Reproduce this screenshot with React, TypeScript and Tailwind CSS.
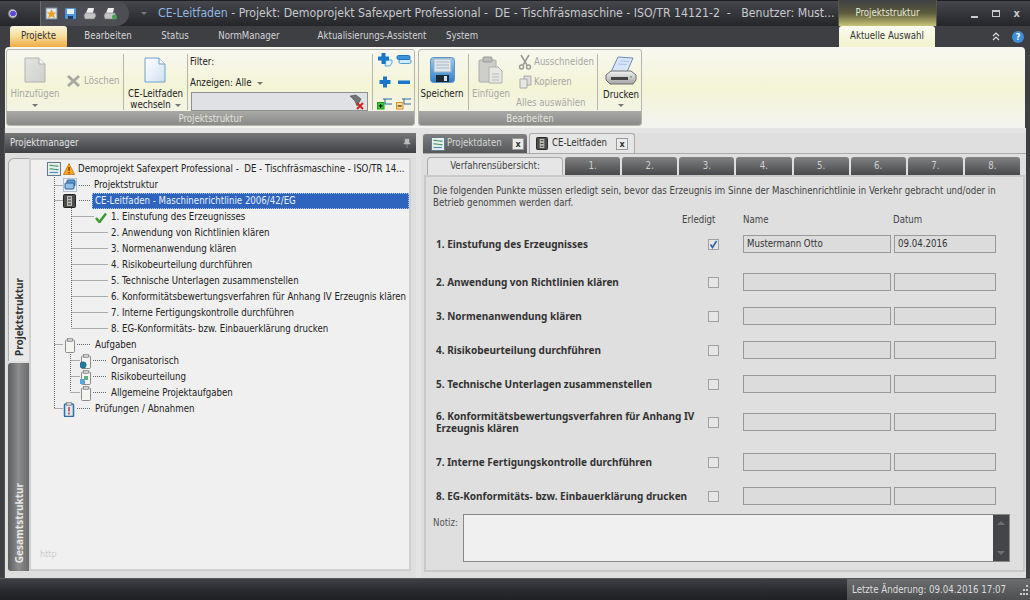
import React from "react";

const font = "font-['DejaVu_Sans','Liberation_Sans',sans-serif] [font-stretch:condensed]";
const boldFont = "font-['Noto_Sans',sans-serif] [font-stretch:normal]";

function Caret({ className = "" }: { className?: string }) {
  return <span className={`inline-block w-0 h-0 border-x-[3px] border-x-transparent border-t-[3px] border-t-[#777] ${className}`} />;
}

function PageIcon({ blue = false, w = 22, h = 26 }: { blue?: boolean; w?: number; h?: number }) {
  return (
    <svg width={w} height={h} viewBox="0 0 22 26">
      <defs>
        <linearGradient id={blue ? "pgb" : "pgg"} x1="0" y1="0" x2="1" y2="1">
          <stop offset="0" stopColor={blue ? "#ffffff" : "#e4e4e0"} />
          <stop offset="1" stopColor={blue ? "#cfe0f2" : "#cfcfcb"} />
        </linearGradient>
      </defs>
      <path d="M1 1H15L21 7V25H1Z" fill={`url(#${blue ? "pgb" : "pgg"})`} stroke={blue ? "#6f9fd0" : "#b2b2ae"} />
      <path d="M15 1V7H21" fill="#f4f4f4" stroke={blue ? "#6f9fd0" : "#b2b2ae"} />
    </svg>
  );
}

function Floppy() {
  return (
    <svg width="25" height="26" viewBox="0 0 25 26">
      <defs>
        <linearGradient id="fl" x1="0" y1="0" x2="0" y2="1">
          <stop offset="0" stopColor="#9cc9ee" />
          <stop offset="1" stopColor="#2f7fcb" />
        </linearGradient>
      </defs>
      <rect x=".5" y=".5" width="24" height="25" rx="3" fill="url(#fl)" stroke="#5d93c4" />
      <rect x="4" y="2" width="17" height="13" fill="#dfe6ec" stroke="#9db2c4" />
      <path d="M6 5H19M6 8H19M6 11H19" stroke="#a6b8c7" />
      <rect x="6" y="18" width="13" height="7" fill="#1d2a36" />
      <rect x="14" y="19" width="3" height="5" fill="#cfe0ee" />
    </svg>
  );
}

function Clipboard26() {
  return (
    <svg width="26" height="28" viewBox="0 0 26 28">
      <rect x="1" y="4" width="17" height="22" rx="1" fill="#cfcfca" stroke="#aaa" />
      <rect x="5" y="1" width="9" height="5" rx="1" fill="#bdbdb8" stroke="#999" />
      <path d="M11 11H20L24 15V27H11Z" fill="#e6e6e2" stroke="#b0b0ac" />
      <path d="M14 18H21M14 21H21M14 24H21" stroke="#bbb" />
    </svg>
  );
}

function Printer() {
  return (
    <svg width="32" height="29" viewBox="0 0 32 29">
      <defs>
        <linearGradient id="pr" x1="0" y1="0" x2="0" y2="1">
          <stop offset="0" stopColor="#f2f2f2" />
          <stop offset="1" stopColor="#a4a4a4" />
        </linearGradient>
      </defs>
      <path d="M13 1L28 2L22 16H6Z" fill="#d6e6f8" stroke="#6d8db8" />
      <path d="M15 5L24 5.5M13 8L22 8.5" stroke="#aac4e2" />
      <path d="M6 15H26L31 19V24L28 28H5L1 24V19Z" fill="url(#pr)" stroke="#6e6e6e" />
      <rect x="6" y="21" width="17" height="3" fill="#444" />
      <rect x="25" y="20" width="2" height="1.5" fill="#5cc05c" />
    </svg>
  );
}

function Scissors() {
  return (
    <svg className="shrink-0" width="14" height="16" viewBox="0 0 14 16" fill="none" stroke="#9a9a96" strokeWidth="1.5">
      <path d="M3 1L9 11M11 1L5 11" />
      <circle cx="3.5" cy="13" r="2" />
      <circle cx="10.5" cy="13" r="2" />
    </svg>
  );
}

function CopyIcon() {
  return (
    <svg className="shrink-0" width="14" height="14" viewBox="0 0 14 14">
      <path d="M6 1H13V10H6Z" fill="#ddd" stroke="#aaa" />
      <path d="M2 4H9V13H2Z" fill="#e8e8e4" stroke="#aaa" />
    </svg>
  );
}

function Eraser() {
  return (
    <svg width="16" height="16" viewBox="0 0 16 16">
      <path d="M2 2L8 1L13 5L9 12L7 7Z" fill="#6f7477" stroke="#4b4f52" strokeWidth=".6" />
      <path d="M9 9L15 15M15 9L9 15" stroke="#d12222" strokeWidth="2" />
    </svg>
  );
}

function SmallTool({ kind }: { kind: string }) {
  const blue = "#1877c9";
  return (
    <svg width="16" height="14" viewBox="0 0 16 14">
      {kind === "addCopy" && (
        <>
          <path d="M9 7H15V10L13 13H8Z" fill="#e8f2fa" stroke="#5aa6dd" />
          <path d="M4.5 0H8.5V3.5H12V7.5H8.5V11H4.5V7.5H1V3.5H4.5Z" fill={blue} />
        </>
      )}
      {kind === "stack" && (
        <>
          <rect x="3" y="6.5" width="12" height="4" rx="1.5" fill="#d6e8f6" stroke="#4f9bd8" />
          <rect x="1" y="2.5" width="13" height="4" rx="1.5" fill="#3f93d8" stroke={blue} />
        </>
      )}
      {kind === "plus" && <path d="M6 1.5H10V5H13.5V9H10V12.5H6V9H2.5V5H6Z" fill={blue} />}
      {kind === "minus" && <rect x="2" y="5.5" width="12" height="3.5" fill={blue} />}
      {kind === "treePlus" && (
        <>
          <path d="M6 3H15M8 3V8H15" stroke="#2b6aa5" fill="none" />
          <rect x=".5" y="6.5" width="6.5" height="6.5" fill="#39d039" stroke="#1f9a1f" />
          <path d="M3.7 8V12M1.7 10H5.7" stroke="#000" />
        </>
      )}
      {kind === "treeMinus" && (
        <>
          <path d="M6 3H15M8 3V8H15" stroke="#2b6aa5" fill="none" />
          <rect x=".5" y="6.5" width="6.5" height="6.5" fill="#f8e0a0" stroke="#e08a20" />
          <path d="M1.7 10H5.7" stroke="#000" />
        </>
      )}
    </svg>
  );
}

function ProjectIcon() {
  return (
    <svg className="shrink-0" width="14" height="14" viewBox="0 0 14 14">
      <rect x=".5" y=".5" width="13" height="13" fill="#e8efe9" stroke="#66788a" />
      <path d="M2.5 3.5C6 2.5 8 5 11.5 4M2.5 7C6 6 8 8.5 11.5 7.5" fill="none" stroke="#3f9b7a" strokeWidth="1.2" />
      <path d="M2.5 10.5H11" stroke="#4f8fc8" strokeWidth="1.2" />
    </svg>
  );
}

function Warning() {
  return (
    <svg className="shrink-0" width="12" height="12" viewBox="0 0 12 12">
      <path d="M6 .5L11.6 11.5H.4Z" fill="#f4a81e" stroke="#c9660c" strokeWidth=".7" />
      <path d="M6 4V8M6 9V10.4" stroke="#7a1e00" strokeWidth="1.2" />
    </svg>
  );
}

function StructIcon() {
  return (
    <svg className="shrink-0" width="14" height="14" viewBox="0 0 14 14">
      <rect x=".5" y=".5" width="13" height="13" fill="none" stroke="#5c93c4" strokeDasharray="1 1" />
      <rect x="4" y="2" width="8" height="6" rx="1" fill="#5f9dd4" stroke="#285f94" />
      <rect x="2" y="5" width="9" height="6" rx="1" fill="#8ec0ea" stroke="#285f94" />
    </svg>
  );
}

function BinderIcon({ small = false }: { small?: boolean }) {
  return (
    <svg className="shrink-0" width={small ? 12 : 13} height={small ? 13 : 14} viewBox="0 0 13 14">
      <rect x=".5" y=".5" width="12" height="13" rx="1" fill="#4a4d4c" stroke="#222" />
      <rect x="4" y="2" width="5" height="10" fill="#b9bfb3" />
      <path d="M5 4H8M5 7H8M5 10H8" stroke="#333" />
    </svg>
  );
}

function ClipIcon({ badge }: { badge?: "globe" | "risk" | "check" }) {
  const stroke = badge === "check" ? "#2a6ea5" : "#8b8b8b";
  const fill = badge === "check" ? "#dbe8f2" : "#f4f4f0";
  return (
    <svg className="shrink-0" width="12" height="15" viewBox="0 0 12 15">
      <rect x="1.5" y="2" width="9" height="12.5" rx="1" fill={fill} stroke={stroke} strokeWidth={badge === "check" ? 1.5 : 1} />
      <rect x="3.5" y=".5" width="5" height="3" fill="#ccc" stroke="#777" strokeWidth=".6" />
      {badge === "globe" && <circle cx="3" cy="11" r="3.2" fill="#1f7d9d" stroke="#0d4d6b" strokeWidth=".5" />}
      {badge === "risk" && (
        <>
          <rect x="0" y="9" width="5" height="5" fill="#58a6dd" />
          <rect x="4" y="6" width="4" height="4" fill="#5db27a" />
        </>
      )}
      {badge === "check" && <path d="M6 5V9.5M6 10.5V12.5" stroke="#c63b2b" strokeWidth="1.5" />}
    </svg>
  );
}

function Check() {
  return (
    <svg className="shrink-0" width="12" height="11" viewBox="0 0 12 11">
      <path d="M1 6L4.5 10L11 1.5" fill="none" stroke="#3c9a35" strokeWidth="2.6" />
    </svg>
  );
}

function BigButton({ icon, lines, disabled, caret }: { icon: React.ReactNode; lines: string[]; disabled?: boolean; caret?: boolean }) {
  return (
    <div className={`flex flex-col items-center h-full pt-[6px] leading-[12px] text-[9.6px] ${disabled ? "text-[#a8a8a4]" : "text-[#222]"}`}>
      <div className="h-[29px] flex items-center">{icon}</div>
      <div className="mt-[4px] whitespace-nowrap text-center">{lines[0]}</div>
      <div className="-mt-px whitespace-nowrap text-center h-[12px] flex items-center gap-1">
        {lines[1]}
        {caret && <Caret />}
      </div>
    </div>
  );
}

function Sep() {
  return <div className="w-px h-[56px] shrink-0 self-start mt-[4px] bg-[#b5b5ab] mx-[3px]" />;
}

function RibbonGroup({ label, width, children }: { label: string; width: string; children: React.ReactNode }) {
  return (
    <div className={`${width} h-[77px] flex flex-col rounded-[3px] border border-[#b4b4b0] overflow-hidden`}>
      <div className="flex-1 flex min-h-0">{children}</div>
      <div className="h-[14px] pt-px bg-gradient-to-b from-[#a9a9a6] to-[#8a8b89] text-center text-[9.6px] leading-[14px] text-[#e2e2dc]">{label}</div>
    </div>
  );
}

function TitleBar() {
  return (
    <div className="h-[26px] flex items-stretch bg-gradient-to-b from-[#45474d] to-[#24262a] border-t border-[#1e1f22] relative">
      <div className="w-[40px] flex items-center pl-[7px]">
        <span className="w-[10px] h-[10px] rounded-full bg-[radial-gradient(circle_at_60%_45%,#5a4bd8_32%,#d5d5da_38%,#26262a_72%)]" />
      </div>
      <div className="w-[89px] flex items-center gap-[6px] pl-[4px] border-l border-[#6a6c70] bg-[#4c4e54] rounded-r-full">
        <svg className="shrink-0" width="13" height="13" viewBox="0 0 13 13"><rect x="1" y="1" width="11" height="11" fill="#dfe6ef" stroke="#6f87a5" /><path d="M6.5 2L8 5.5H11.5L8.8 7.8L10 11.5L6.5 9.3L3 11.5L4.2 7.8L1.5 5.5H5Z" fill="#e8a21e" /></svg>
        <svg className="shrink-0" width="13" height="13" viewBox="0 0 13 13"><rect x="1" y="1" width="11" height="11" rx="1" fill="#4f94d4" /><rect x="3" y="2" width="7" height="5" fill="#e7eef5" /><rect x="4" y="9" width="5" height="3" fill="#1a3e60" /></svg>
        <svg className="shrink-0" width="14" height="13" viewBox="0 0 14 13"><path d="M5 1H11L10 6H3Z" fill="#eee" /><path d="M2 6H12L13 9L11 12H2L1 9Z" fill="#c4c4c4" stroke="#777" strokeWidth=".6" /></svg>
        <svg className="shrink-0" width="15" height="13" viewBox="0 0 15 13"><path d="M5 1H11L10 6H3Z" fill="#eee" /><path d="M2 6H12L13 9L11 12H2L1 9Z" fill="#c4c4c4" stroke="#777" strokeWidth=".6" /><circle cx="11.5" cy="10" r="2.5" fill="#47a05a" /></svg>
      </div>
      <div className="w-[29px] flex items-center justify-center">
        <Caret className="border-t-[#8a8c92]" />
      </div>
      <div className="w-[680px] flex items-center whitespace-pre overflow-hidden text-[12.2px] text-[#c8c9cc]">
        <span className="text-[#8fb6e0]">CE-Leitfaden</span>
        <span>{" - Projekt: Demoprojekt Safexpert Professional -  DE - Tischfräsmaschine - ISO/TR 14121-2  -   Benutzer: Must..."}</span>
      </div>
      <div className="w-[99px] -mt-px bg-gradient-to-b from-[#3f4042] via-[#5b5b3c] to-[#c8c777] border-x border-[#55564a] flex items-center justify-center text-[9.6px] text-[#e9e9d8]">Projektstruktur</div>
      <div className="flex-1 flex items-center justify-end gap-[14px] pr-[10px] text-[#c8cacd]">
        <span className="w-[7px] h-[2px] mt-[6px] bg-[#c8cacd]" />
        <span className="w-[8px] h-[7px] border border-[#c8cacd] border-t-2" />
        <span className="text-[11px] leading-none font-bold">x</span>
      </div>
    </div>
  );
}

function MenuTabs() {
  const items = [
    { t: "Bearbeiten", w: "w-[82px]" },
    { t: "Status", w: "w-[52px]" },
    { t: "NormManager", w: "w-[96px]" },
    { t: "Aktualisierungs-Assistent", w: "w-[150px]" },
    { t: "System", w: "w-[30px]" },
  ];
  return (
    <div className="h-[21px] flex items-stretch bg-[#3d3f43] text-[9.6px] text-[#d4d5d7] pl-[10px]">
      <div className="w-[57px] rounded-t-[3px] bg-gradient-to-b from-[#f8f6df] via-[#f7dc96] to-[#f0ab3f] text-[#333] flex items-center justify-center">Projekte</div>
      {items.map((i) => (
        <div key={i.t} className={`${i.w} flex items-center justify-center whitespace-nowrap`}>{i.t}</div>
      ))}
      <div className="w-[362px]" />
      <div className="w-[96px] rounded-t-[3px] bg-gradient-to-b from-[#fbfbf0] to-[#f3f3cd] text-[#333] flex items-center justify-center">Aktuelle Auswahl</div>
      <div className="flex-1 flex items-center justify-end gap-[12px] pr-[6px]">
        <svg width="8" height="9" viewBox="0 0 8 9" fill="none" stroke="#ddd" strokeWidth="1.2"><path d="M1 4L4 1L7 4M1 8L4 5L7 8" /></svg>
        <span className="w-[12px] h-[12px] rounded-full bg-[#3f8fd8] text-white text-[9px] font-bold leading-[12px] text-center">?</span>
      </div>
    </div>
  );
}

function Ribbon() {
  return (
    <div className="h-[81px] mx-[5px] flex gap-[3px] pt-[2px] pl-[1px] rounded-t-[4px] bg-gradient-to-b from-[#f8f8f2] via-[#f4f4d6] to-[#f3f4ef]">
      <RibbonGroup label="Projektstruktur" width="w-[409px]">
        <div className="w-[56px] flex justify-center"><BigButton disabled icon={<PageIcon />} lines={["Hinzufügen", ""]} caret /></div>
        <div className="w-[57px] pt-[24px] flex items-start gap-[3px] pl-[3px] text-[9.6px] text-[#a8a8a4] leading-[14px]">
          <svg className="shrink-0" width="15" height="14" viewBox="0 0 15 14"><path d="M2 2L13 12M13 2L2 12" stroke="#a9a9a4" strokeWidth="3" /></svg>
          Löschen
        </div>
        <Sep />
        <div className="w-[57px] flex justify-center"><BigButton icon={<PageIcon blue />} lines={["CE-Leitfaden", "wechseln"]} caret /></div>
        <Sep />
        <div className="w-[178px] flex flex-col text-[9.6px] text-[#222] leading-[12px] pt-[6px]">
          <div className="h-[14px] -ml-px">Filter:</div>
          <div className="h-[12px] mt-[7px] -ml-px flex items-center gap-[5px]">Anzeigen: Alle <Caret /></div>
          <div className="h-[19px] mt-[3px] w-[177px] bg-[#dfe1e5] border border-[#8f9090] flex items-center justify-end pr-[3px]"><Eraser /></div>
        </div>
        <Sep />
        <div className="w-[37px] pt-[3px] grid grid-cols-2 grid-rows-3 gap-y-[7px] justify-items-center content-start">
          <SmallTool kind="addCopy" />
          <SmallTool kind="stack" />
          <SmallTool kind="plus" />
          <SmallTool kind="minus" />
          <SmallTool kind="treePlus" />
          <SmallTool kind="treeMinus" />
        </div>
      </RibbonGroup>
      <RibbonGroup label="Bearbeiten" width="w-[224px]">
        <div className="w-[46px] flex justify-center"><BigButton icon={<Floppy />} lines={["Speichern", ""]} /></div>
        <Sep />
        <div className="w-[38px] flex justify-center"><BigButton disabled icon={<Clipboard26 />} lines={["Einfügen", ""]} /></div>
        <div className="w-[84px] pl-[8px] pt-[5px] text-[9.6px] text-[#a8a8a4] leading-[14px] flex flex-col gap-[6px]">
          <div className="flex items-center gap-[2px] whitespace-nowrap h-[14px]"><Scissors />Ausschneiden</div>
          <div className="flex items-center gap-[2px] whitespace-nowrap h-[14px]"><CopyIcon />Kopieren</div>
          <div className="whitespace-nowrap -ml-[2px] mt-px">Alles auswählen</div>
        </div>
        <Sep />
        <div className="flex-1 flex justify-center"><BigButton icon={<Printer />} lines={["Drucken", ""]} caret /></div>
      </RibbonGroup>
    </div>
  );
}

function TreeLines() {
  const dots = { stroke: "#666", strokeDasharray: "1 1", fill: "none" };
  return (
    <svg className="absolute inset-0 pointer-events-none" width="378" height="408">
      <path {...dots} d="M23.5 17V248M23.5 25.5H32M23.5 40.5H32M23.5 184.5H32M23.5 248.5H32" />
      <path {...dots} d="M48 25.5H60M48 40.5H60M46 184.5H60M46 248.5H60" />
      <path {...dots} d="M40.5 48V168M40.5 56.5H63M40.5 72.5H77M40.5 88.5H77M40.5 104.5H77M40.5 120.5H77M40.5 136.5H77M40.5 152.5H77M40.5 168.5H77" />
      <path {...dots} d="M39.5 192V232M39.5 200.5H49M39.5 216.5H49M39.5 232.5H49M62 200.5H76M62 216.5H76M62 232.5H76" />
    </svg>
  );
}

function TreeRow({ text, pad, icon, selected }: { text: string; pad: string; icon?: React.ReactNode; selected?: boolean }) {
  return (
    <div className={`relative h-[16px] flex items-center whitespace-nowrap ${pad}`}>
      {icon}
      {selected ? (
        <span className="absolute left-[61px] right-0 top-0 h-[16px] bg-[#2e64bd] border border-dotted border-[#a9c2e8] text-[#e9eefa] leading-[14px] pl-[2px]">{text}</span>
      ) : (
        <span className="text-[#222]">{text}</span>
      )}
    </div>
  );
}

function LeftPanel() {
  const steps = [
    "2. Anwendung von Richtlinien klären",
    "3. Normenanwendung klären",
    "4. Risikobeurteilung durchführen",
    "5. Technische Unterlagen zusammenstellen",
    "6. Konformitätsbewertungsverfahren für Anhang IV Erzeugnis klären",
    "7. Interne Fertigungskontrolle durchführen",
    "8. EG-Konformitäts- bzw. Einbauerklärung drucken",
  ];
  return (
    <div className="w-[411px] shrink-0 flex flex-col bg-[#dedede]">
      <div className="h-[20px] shrink-0 flex items-center justify-between px-[5px] bg-gradient-to-b from-[#76787a] to-[#3f4145] text-[9.6px] text-[#e0e0e0]">
        Projektmanager
        <svg width="8" height="10" viewBox="0 0 8 10"><path d="M2 1H6V5H7V6H1V5H2ZM4 6V10" fill="#bbb" stroke="#bbb" strokeWidth=".5" /></svg>
      </div>
      <div className="flex-1 flex pt-[5px] pb-[7px] pl-[3px] pr-[5px] min-h-0">
        <div className="w-[21px] shrink-0 flex flex-col gap-[2px]">
          <div className="h-[203px] rounded-tl-[6px] bg-[#e9e9e9] border-l border-t border-[#aaa] flex items-end justify-center pb-[5px]">
            <span className={`[writing-mode:vertical-rl] rotate-180 text-[10px] font-bold text-[#333] leading-none ${boldFont}`}>Projektstruktur</span>
          </div>
          <div className="flex-1 rounded-l-[3px] bg-gradient-to-r from-[#5c5e60] via-[#8c8d8e] to-[#6a6b6c] flex items-end justify-center pb-[8px]">
            <span className={`[writing-mode:vertical-rl] rotate-180 text-[10px] font-bold text-[#e6e6e6] leading-none ${boldFont}`}>Gesamtstruktur</span>
          </div>
        </div>
        <div className="flex-1 min-w-0 relative bg-[#f0f0f0] border-2 border-[#cfcfcf] pt-[1px] text-[9.6px]">
          <TreeLines />
          <TreeRow text="Demoprojekt Safexpert Professional -  DE - Tischfräsmaschine - ISO/TR 14..." pad="pl-[16px] whitespace-pre" icon={<><ProjectIcon /><span className="w-[2px] shrink-0" /><Warning /><span className="w-[3px] shrink-0" /></>} />
          <TreeRow text="Projektstruktur" pad="pl-[32px] gap-[17px]" icon={<StructIcon />} />
          <TreeRow text="CE-Leitfaden - Maschinenrichtlinie 2006/42/EG" pad="pl-[32px]" icon={<BinderIcon />} selected />
          <TreeRow text="1. Einstufung des Erzeugnisses" pad="pl-[64px] gap-[4px]" icon={<Check />} />
          {steps.map((s) => (
            <TreeRow key={s} text={s} pad="pl-[80px]" />
          ))}
          <TreeRow text="Aufgaben" pad="pl-[33px] gap-[19px]" icon={<ClipIcon />} />
          <TreeRow text="Organisatorisch" pad="pl-[49px] gap-[19px]" icon={<ClipIcon badge="globe" />} />
          <TreeRow text="Risikobeurteilung" pad="pl-[49px] gap-[19px]" icon={<ClipIcon badge="risk" />} />
          <TreeRow text="Allgemeine Projektaufgaben" pad="pl-[49px] gap-[19px]" icon={<ClipIcon />} />
          <TreeRow text="Prüfungen / Abnahmen" pad="pl-[32px] gap-[20px]" icon={<ClipIcon badge="check" />} />
          <div className="absolute left-[9px] bottom-[8px] text-[9px] text-[#ccc]">http</div>
        </div>
      </div>
    </div>
  );
}

function CloseBox() {
  return <span className="w-[12px] h-[12px] border border-[#999] bg-[#ececec] text-[9px] leading-[10px] text-center text-[#333] font-bold">x</span>;
}

function StepRow({ label, mt, name, date, checked }: { label: string[]; mt: string; name?: string; date?: string; checked?: boolean }) {
  return (
    <div className={`${mt} h-[18px] flex items-center`}>
      <div className={`w-[275px] pl-[3px] text-[10px] font-bold text-[#333] leading-[12px] ${boldFont}`}>
        {label.map((l) => <div key={l} className="whitespace-nowrap">{l}</div>)}
      </div>
      <div className="w-[11px] mr-[24px] flex justify-center">
        <span className="w-[11px] h-[11px] border border-[#a0a0a0] bg-[#e6e6e6] flex items-center justify-center">
          {checked && <svg width="9" height="9" viewBox="0 0 9 9"><path d="M1.5 4.5L3.5 7.5L7.5 1" fill="none" stroke="#2d62b5" strokeWidth="1.6" /></svg>}
        </span>
      </div>
      <div className="w-[148px] h-[18px] border border-[#999] bg-[#dcdcdc] text-[9.6px] text-[#333] leading-[16px] pl-[3px]">{name}</div>
      <div className="w-[102px] h-[18px] ml-[3px] border border-[#999] bg-[#dcdcdc] text-[9.6px] text-[#333] leading-[16px] pl-[3px]">{date}</div>
    </div>
  );
}

function RightPanel() {
  return (
    <div className="flex-1 flex flex-col bg-[#dfdfdf] pl-[2px] min-w-0">
      <div className="h-[20px] shrink-0 flex items-end gap-[2px] text-[9.6px]">
        <div className="w-[104px] h-[19px] rounded-t-[3px] bg-gradient-to-b from-[#7d7f81] to-[#56585a] text-[#d4d4d4] flex items-center gap-[2px] pl-[8px] whitespace-nowrap">
          <ProjectIcon /><span className="flex-1">Projektdaten</span><span className="mr-[3px] flex"><CloseBox /></span>
        </div>
        <div className="w-[106px] h-[20px] rounded-t-[3px] bg-[#e6e6e6] border border-b-0 border-[#aaa] text-[#333] flex items-center gap-[4px] pl-[6px] whitespace-nowrap">
          <BinderIcon small /><span className="flex-1">CE-Leitfaden</span><span className="mr-[6px] flex"><CloseBox /></span>
        </div>
      </div>
      <div className="flex-1 border-t border-[#aaa] px-[1px] pt-[3px] pb-[6px] flex flex-col min-h-0">
        <div className="h-[18px] shrink-0 flex gap-[2px] pl-[3px] pr-[5px] text-[9.6px]">
          <div className="w-[136px] rounded-t-[4px] bg-[#e6e6e6] border border-b-0 border-[#aaa] flex items-center justify-center text-[#444]">Verfahrensübersicht:</div>
          {["1.", "2.", "3.", "4.", "5.", "6.", "7.", "8."].map((n) => (
            <div key={n} className="flex-1 rounded-t-[3px] bg-gradient-to-b from-[#808284] to-[#48494b] flex items-center justify-center text-[#cfcfcf]">{n}</div>
          ))}
        </div>
        <div className="flex-1 border-2 border-[#c9c9c9] pl-[7px] min-h-0 flex flex-col">
          <div className="text-[9.6px] leading-[12px] text-[#444] mt-[8px] w-[565px] shrink-0">
            Die folgenden Punkte müssen erledigt sein, bevor das Erzeugnis im Sinne der Maschinenrichtlinie in Verkehr gebracht und/oder in Betrieb genommen werden darf.
          </div>
          <div className="flex shrink-0 h-[12px] mt-[5px] text-[9.6px] leading-[12px] text-[#444]">
            <span className="ml-[249px] w-[61px]">Erledigt</span>
            <span className="w-[150px]">Name</span>
            <span>Datum</span>
          </div>
          <StepRow mt="mt-[9px]" label={["1. Einstufung des Erzeugnisses"]} name="Mustermann Otto" date="09.04.2016" checked />
          <StepRow mt="mt-[20px]" label={["2. Anwendung von Richtlinien klären"]} />
          <StepRow mt="mt-[16px]" label={["3. Normenanwendung klären"]} />
          <StepRow mt="mt-[16px]" label={["4. Risikobeurteilung durchführen"]} />
          <StepRow mt="mt-[16px]" label={["5. Technische Unterlagen zusammenstellen"]} />
          <StepRow mt="mt-[20px]" label={["6. Konformitätsbewertungsverfahren für Anhang IV", "Erzeugnis klären"]} />
          <StepRow mt="mt-[22px]" label={["7. Interne Fertigungskontrolle durchführen"]} />
          <StepRow mt="mt-[16px]" label={["8. EG-Konformitäts- bzw. Einbauerklärung drucken"]} />
          <div className="flex mt-[9px] text-[9.6px] text-[#555] shrink-0">
            <span className="w-[30px] pt-[2px]">Notiz:</span>
            <div className="w-[547px] h-[48px] bg-[#f0f0f0] border border-[#888] flex justify-end">
              <div className="w-[16px] bg-[#444548] flex flex-col items-center justify-between py-[6px]">
                <span className="w-0 h-0 border-x-[4px] border-x-transparent border-b-[4px] border-b-[#6c6e70]" />
                <span className="w-0 h-0 border-x-[4px] border-x-transparent border-t-[4px] border-t-[#6c6e70]" />
              </div>
            </div>
          </div>
        </div>
      </div>
    </div>
  );
}

export default function App() {
  return (
    <div className={`w-[1030px] h-[600px] overflow-hidden flex flex-col bg-[#3d3f43] ${font}`}>
      <TitleBar />
      <MenuTabs />
      <Ribbon />
      <div className="h-[450px] shrink-0 mx-[4px] pt-[5px] flex gap-[5px] bg-[#e4e4e4] border-l border-[#555]">
        <LeftPanel />
        <RightPanel />
      </div>
      <div className="flex-1 flex justify-end bg-gradient-to-b from-[#3f4146] via-[#2a2c30] to-[#1f2023] border-t border-[#555]">
        <div className="w-[183px] bg-gradient-to-b from-[#6a6c6e] to-[#4d4f51] text-[9.6px] leading-[20px] text-[#ddd] pl-[5px] flex items-center justify-between pr-[2px]">
          Letzte Änderung: 09.04.2016 17:07
          <svg width="10" height="10" viewBox="0 0 10 10" fill="#ccc"><rect x="8" y="0" width="2" height="2" /><rect x="5" y="4" width="2" height="2" /><rect x="8" y="4" width="2" height="2" /><rect x="2" y="8" width="2" height="2" /><rect x="5" y="8" width="2" height="2" /><rect x="8" y="8" width="2" height="2" /></svg>
        </div>
      </div>
    </div>
  );
}
